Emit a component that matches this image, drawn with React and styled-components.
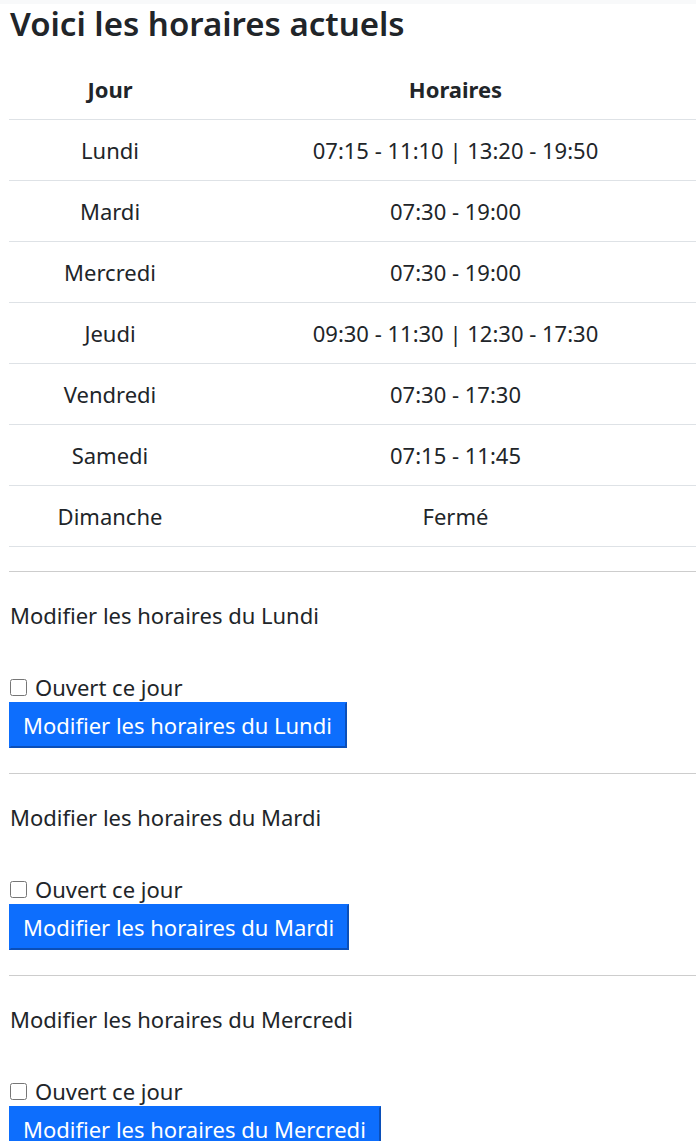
import React from 'react';
import styled, { createGlobalStyle } from 'styled-components';

const GlobalStyle = createGlobalStyle`
  html, body {
    margin: 0;
    padding: 0;
    background: #fff;
    overflow: hidden;
  }
  body {
    font-family: "Segoe UI", "Noto Sans", "Open Sans", sans-serif;
    font-size: 22px;
    line-height: 30px;
    color: #212529;
  }
`;

const TopBar = styled.div`
  height: 4px;
  background: #f8f9fa;
`;

const Page = styled.div`
  padding-left: 9px;
`;

const Title = styled.h2`
  margin: 0 0 15px 1px;
  font-size: 33px;
  font-weight: 600;
  line-height: 40px;
`;

const Table = styled.table`
  width: 691px;
  border-collapse: collapse;
  table-layout: fixed;
`;

const Cell = styled.td`
  padding: 15px 0;
  text-align: center;
  border-bottom: 1px solid #dee2e6;
  font-weight: ${p => (p.$head ? 700 : 400)};
  width: ${p => p.$width || 'auto'};
`;

const Section = styled.section`
  display: flex;
  flex-direction: column;
  align-items: flex-start;
`;

const Rule = styled.hr`
  width: 100%;
  margin: 0;
  border: none;
  border-top: 1px solid #cdcdcd;
`;

const SectionLabel = styled.p`
  margin: 28px 0 42px 1px;
`;

const CheckRow = styled.label`
  display: flex;
  align-items: center;
  gap: 8px;
  margin-left: 1px;
`;

const Box = styled.input`
  width: 17px;
  height: 17px;
  margin: 0;
`;

const Button = styled.button`
  font: inherit;
  color: #fff;
  background: #0d6efd;
  border-style: solid;
  border-width: 2px;
  border-color: #0d6efd #0b4fb8 #0b4fb8 #0d6efd;
  padding: 6px 13px 6px 12px;
  margin-bottom: 25px;
  line-height: 30px;
  cursor: pointer;
`;

const hours = [
  ['Lundi', ['07:15 - 11:10', '13:20 - 19:50']],
  ['Mardi', ['07:30 - 19:00']],
  ['Mercredi', ['07:30 - 19:00']],
  ['Jeudi', ['09:30 - 11:30', '12:30 - 17:30']],
  ['Vendredi', ['07:30 - 17:30']],
  ['Samedi', ['07:15 - 11:45']],
  ['Dimanche', ['Fermé']],
];

const sections = ['Lundi', 'Mardi', 'Mercredi'];

export default function App() {
  return (
    <>
      <GlobalStyle />
      <TopBar />
      <Page>
        <Title>Voici les horaires actuels</Title>
        <Table>
          <thead>
            <tr>
              <Cell as="th" $head $width="202px">Jour</Cell>
              <Cell as="th" $head>Horaires</Cell>
            </tr>
          </thead>
          <tbody>
            {hours.map(([day, slots]) => (
              <tr key={day}>
                <Cell>{day}</Cell>
                <Cell>{slots.join(' | ')}</Cell>
              </tr>
            ))}
          </tbody>
        </Table>
        <div style={{ height: 24 }} />
        {sections.map(day => (
          <Section key={day}>
            <Rule />
            <SectionLabel>Modifier les horaires du {day}</SectionLabel>
            <CheckRow>
              <Box type="checkbox" />
              Ouvert ce jour
            </CheckRow>
            <Button type="button">Modifier les horaires du {day}</Button>
          </Section>
        ))}
      </Page>
    </>
  );
}
